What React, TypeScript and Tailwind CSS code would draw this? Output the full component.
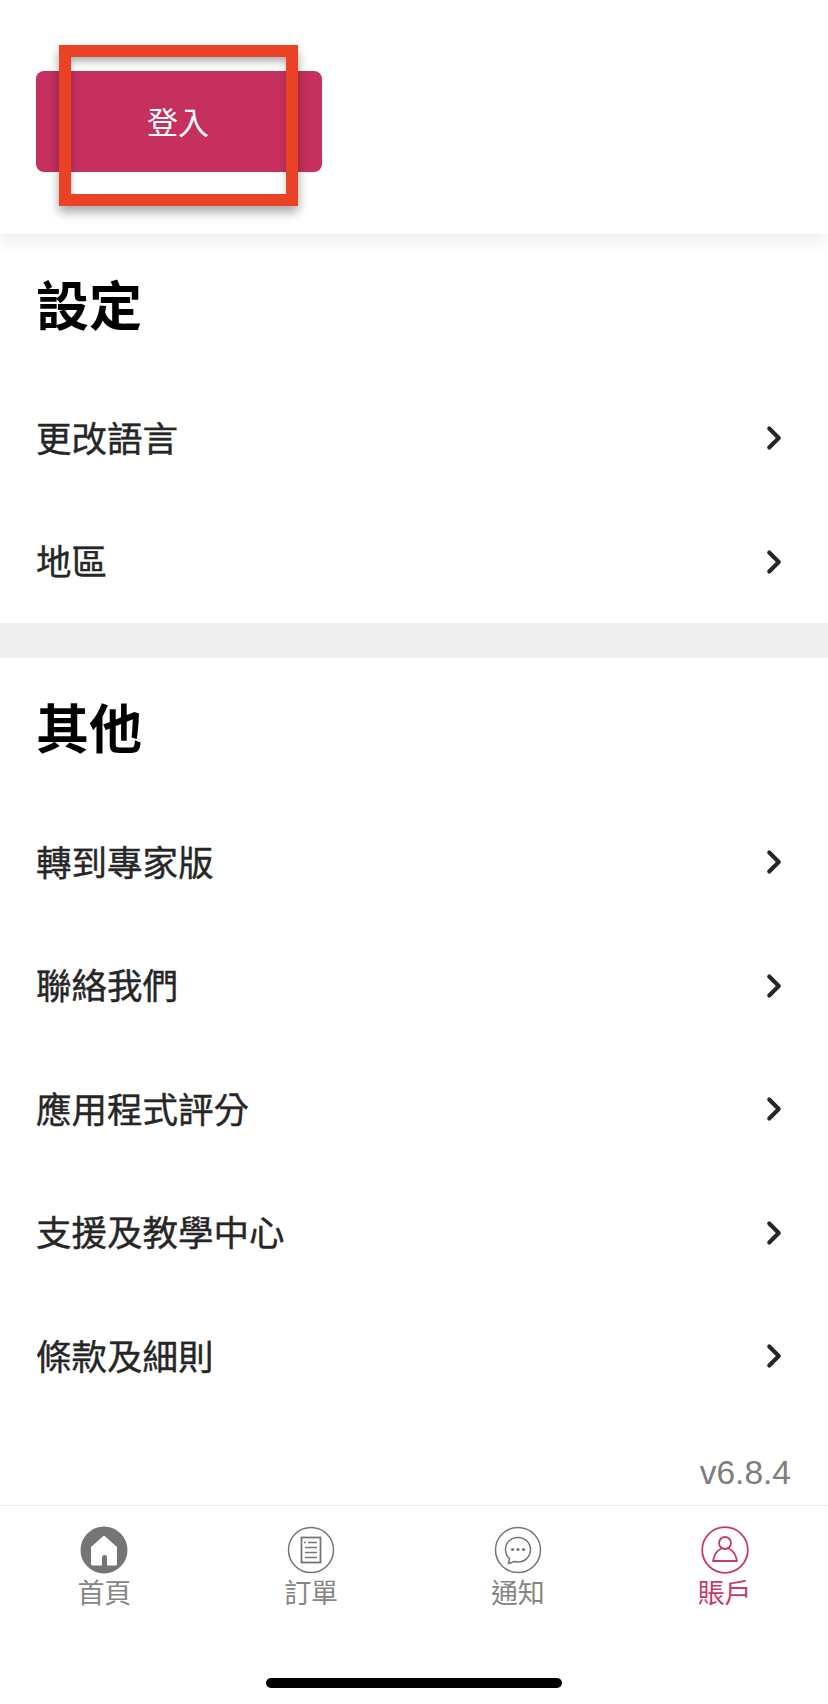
import { ChevronRight } from "lucide-react"

const Row = ({ label }: { label: string }) => (
	<div className="flex h-[123.5px] items-center justify-between pl-9 pr-[35px]">
		<span className="pb-[5px] text-[35.5px] font-normal leading-none text-[#262626] [-webkit-text-stroke:0.4px_#262626]">{label}</span>
		<ChevronRight className="mb-[1px] text-[#262626]" size={38} strokeWidth={2.6} />
	</div>
)

const HomeIcon = () => (
	<svg width="48" height="48" viewBox="0 0 48 48">
		<circle cx="24" cy="24" r="23.5" fill="#757575" />
		<path d="M24 9.5 L37 21 V38 Q37 39.5 35.500 39.500 H27 V32 Q27 29 24.500 29 Q22 29 22 32 V39.500 H13 Q11 39.500 11 38 V21 Z" fill="#fff" />
	</svg>
)

const OrderIcon = () => (
	<svg width="48" height="48" viewBox="0 0 48 48" fill="none" stroke="#757575">
		<circle cx="24" cy="24" r="22.500" strokeWidth="1.500" />
		<rect x="14.500" y="11.500" width="19" height="25" strokeWidth="1.800" />
		<path d="M21 16.500H30M18 21.500H30M18 26.500H30M18 31.500H30" strokeWidth="1.600" />
		<path d="M17 16.500H19" strokeWidth="1.600" />
	</svg>
)

const ChatIcon = () => (
	<svg width="48" height="48" viewBox="0 0 48 48" fill="none" stroke="#757575">
		<circle cx="24" cy="24" r="22.500" strokeWidth="1.500" />
		<path d="M24 11.500C16.500 11.500 11.500 17 11.500 23.500C11.500 27.500 13 30.500 15.500 32.500L14.500 37.500L20.500 35.500C21.500 35.800 22.800 36 24 36C31 36 36.500 30.500 36.500 23.500C36.500 17 31 11.500 24 11.500Z" strokeWidth="1.500" />
		<circle cx="18.500" cy="23.500" r="1.600" fill="#757575" stroke="none" />
		<circle cx="24" cy="23.500" r="1.600" fill="#757575" stroke="none" />
		<circle cx="29.500" cy="23.500" r="1.600" fill="#757575" stroke="none" />
	</svg>
)

const UserIcon = () => (
	<svg width="48" height="48" viewBox="0 0 48 48" fill="none" stroke="#c5396a">
		<circle cx="24" cy="24" r="22.800" strokeWidth="1.800" />
		<circle cx="24" cy="17" r="6" strokeWidth="1.800" />
		<path d="M20.500 22.500C16 24.500 13 29 12 35H36C35 29 32 24.500 27.500 22.500" strokeWidth="1.800" strokeLinejoin="round" />
	</svg>
)

const tabs = [
	{ label: "首頁", icon: <HomeIcon />, active: false },
	{ label: "訂單", icon: <OrderIcon />, active: false },
	{ label: "通知", icon: <ChatIcon />, active: false },
	{ label: "賬戶", icon: <UserIcon />, active: true }
]

const App = () => {
	return (
		<div className="relative flex h-[1704px] w-[828px] flex-col overflow-hidden bg-white font-['Noto_Sans_CJK_TC','Noto_Sans_CJK_SC',sans-serif]">
			<header className="relative z-10 h-[234px] shrink-0 bg-white pl-9 pt-[71px] shadow-[0_8px_16px_rgba(0,0,0,0.07)]">
				<button className="flex h-[101px] w-[286px] items-center justify-center rounded-[8px] bg-[#c5305f] pb-[1px] pr-[2px] text-[31px] text-white">
					登入
				</button>
			</header>

			<section className="h-[389px] shrink-0">
				<h2 className="flex h-[143px] items-center pb-[4px] pl-9 text-[53px] font-bold leading-none text-black">設定</h2>
				<Row label="更改語言" />
				<Row label="地區" />
			</section>

			<div className="h-[35px] shrink-0 bg-[#efefef]" />

			<section className="flex-1">
				<h2 className="flex h-[143px] items-center pb-[6px] pl-9 text-[53px] font-bold leading-none text-black">其他</h2>
				<Row label="轉到專家版" />
				<Row label="聯絡我們" />
				<Row label="應用程式評分" />
				<Row label="支援及教學中心" />
				<Row label="條款及細則" />
				<div className="flex justify-end pr-[37px] pt-[37px] font-['Liberation_Sans',sans-serif] text-[33.5px] leading-none text-[#7d7d7d]">
					v6.8.4
				</div>
			</section>

			<nav className="h-[199px] shrink-0 border-t border-[#e8e8e8]">
				<div className="grid grid-cols-4 pl-[1px] pt-5">
					{tabs.map((tab) => (
						<div key={tab.label} className="flex flex-col items-center">
							{tab.icon}
							<span
								className={
									tab.active
										? "text-[27px] leading-[36px] text-[#c5396a]"
										: "text-[27px] leading-[36px] text-[#858585]"
								}
							>
								{tab.label}
							</span>
						</div>
					))}
				</div>
			</nav>

			{/* home indicator */}
			<div className="absolute bottom-[16px] left-[266px] h-[10px] w-[296px] rounded-full bg-black" />

			{/* red annotation box */}
			<div className="absolute left-[59px] top-[45px] z-20 h-[161px] w-[239px] border-[12px] border-[#e94225] shadow-[0_6px_10px_rgba(0,0,0,0.35),inset_0_6px_8px_-2px_rgba(0,0,0,0.35)]" />
		</div>
	)
}

export default App
